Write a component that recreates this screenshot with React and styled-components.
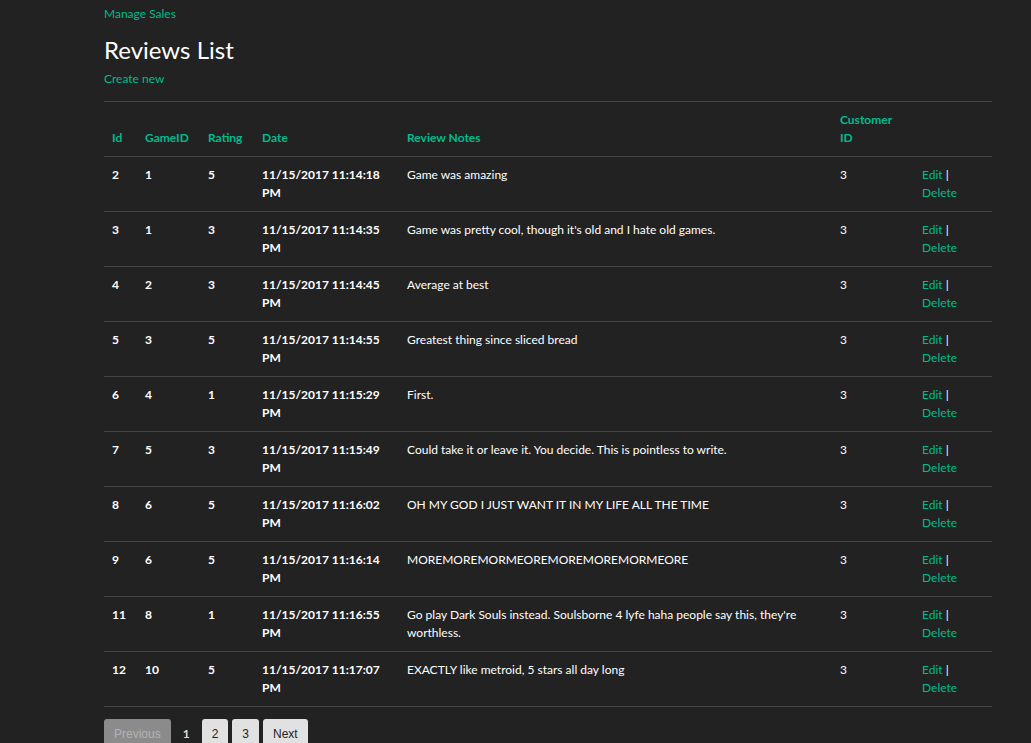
import React from "react";
import styled, { createGlobalStyle } from "styled-components";

const Global = createGlobalStyle`
  html, body { margin: 0; padding: 0; background: #222222; }
  body { font-family: Lato, "Open Sans", sans-serif; color: #ffffff; font-size: 12px; }
`;

const Page = styled.div`
  padding: 5px 39px 0 104px;
  box-sizing: border-box;
  width: 1031px;
  height: 743px;
  overflow: hidden;
`;

const Link = styled.a`
  color: #00bc8c;
  text-decoration: none;
  font-size: 12px;
  line-height: 18px;
`;

const TopLink = styled(Link)`
  display: block;
`;

const Title = styled.h2`
  margin: 13px 0 0;
  font-size: 24px;
  font-weight: 400;
  line-height: 28px;
  color: #ffffff;
`;

const CreateRow = styled.p`
  margin: 6px 0 13px;
  line-height: 18px;
`;

const Table = styled.table`
  width: 888px;
  border-collapse: collapse;
  table-layout: fixed;
  border-top: 1px solid #464545;
`;

const Th = styled.th`
  text-align: left;
  vertical-align: bottom;
  padding: 9px 8px;
  line-height: 18px;
  color: #00bc8c;
  font-weight: 700;
  font-size: 12px;
  border-bottom: 1px solid #464545;
`;

const Td = styled.td`
  text-align: left;
  vertical-align: top;
  padding: 9px 8px;
  line-height: 18px;
  font-size: 12px;
  font-weight: ${(p) => (p.$bold ? 700 : 400)};
  color: #ffffff;
  border-bottom: 1px solid #464545;
`;

const Sep = styled.span`
  color: #ffffff;
`;

const Pager = styled.div`
  display: flex;
  align-items: flex-start;
  gap: 4px;
  margin-top: 12px;
`;

const PageBtn = styled.span`
  display: inline-block;
  padding: 7px 10px 7px;
  font-family: "Liberation Sans", Arial, sans-serif;
  font-size: 12px;
  line-height: 16px;
  border-radius: 3px 3px 0 0;
  background: ${(p) => (p.$disabled ? "#8b8b8b" : "#e1e1e1")};
  color: ${(p) => (p.$disabled ? "#b3b3b3" : "#222222")};
`;

const Current = styled.span`
  display: inline-block;
  padding: 7px 8px 7px;
  font-family: Lato, sans-serif;
  font-weight: 700;
  font-size: 12px;
  line-height: 16px;
  color: #dddddd;
`;

const rows = [
  [2, 1, 5, "11/15/2017 11:14:18 PM", "Game was amazing"],
  [3, 1, 3, "11/15/2017 11:14:35 PM", "Game was pretty cool, though it's old and I hate old games."],
  [4, 2, 3, "11/15/2017 11:14:45 PM", "Average at best"],
  [5, 3, 5, "11/15/2017 11:14:55 PM", "Greatest thing since sliced bread"],
  [6, 4, 1, "11/15/2017 11:15:29 PM", "First."],
  [7, 5, 3, "11/15/2017 11:15:49 PM", "Could take it or leave it. You decide. This is pointless to write."],
  [8, 6, 5, "11/15/2017 11:16:02 PM", "OH MY GOD I JUST WANT IT IN MY LIFE ALL THE TIME"],
  [9, 6, 5, "11/15/2017 11:16:14 PM", "MOREMOREMORMEOREMOREMOREMORMEORE"],
  [11, 8, 1, "11/15/2017 11:16:55 PM", "Go play Dark Souls instead. Soulsborne 4 lyfe haha people say this, they're worthless."],
  [12, 10, 5, "11/15/2017 11:17:07 PM", "EXACTLY like metroid, 5 stars all day long"],
];

const widths = [33, 63, 54, 145, 433, 82, 78];

export default function App() {
  return (
    <Page>
      <Global />
      <TopLink href="#">Manage Sales</TopLink>
      <Title>Reviews List</Title>
      <CreateRow>
        <Link href="#">Create new</Link>
      </CreateRow>
      <Table>
        <colgroup>
          {widths.map((w, i) => (
            <col key={i} style={{ width: w }} />
          ))}
        </colgroup>
        <thead>
          <tr>
            <Th>Id</Th>
            <Th>GameID</Th>
            <Th>Rating</Th>
            <Th>Date</Th>
            <Th>Review Notes</Th>
            <Th>Customer ID</Th>
            <Th></Th>
          </tr>
        </thead>
        <tbody>
          {rows.map((r) => (
            <tr key={r[0]}>
              <Td $bold>{r[0]}</Td>
              <Td $bold>{r[1]}</Td>
              <Td $bold>{r[2]}</Td>
              <Td $bold>{r[3]}</Td>
              <Td>{r[4]}</Td>
              <Td>3</Td>
              <Td>
                <Link href="#">Edit</Link> <Sep>|</Sep> <Link href="#">Delete</Link>
              </Td>
            </tr>
          ))}
        </tbody>
      </Table>
      <Pager>
        <PageBtn $disabled>Previous</PageBtn>
        <Current>1</Current>
        <PageBtn>2</PageBtn>
        <PageBtn>3</PageBtn>
        <PageBtn>Next</PageBtn>
      </Pager>
    </Page>
  );
}
